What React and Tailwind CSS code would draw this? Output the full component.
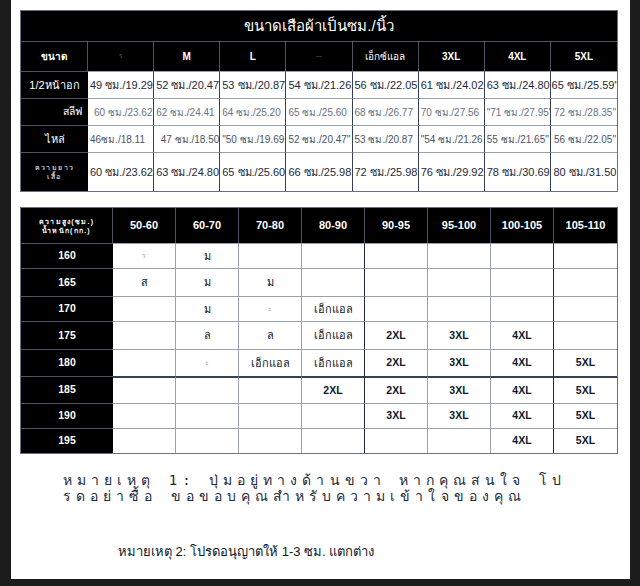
import React from 'react';

const SIZES = ['ร', 'M', 'L', '—', 'เอ็กซ์แอล', '3XL', '4XL', '5XL'];

const MEASURES = [
    {
        label: '1/2หน้าอก',
        tone: 'text-gray-800',
        cells: ['49 ซม./19.29', '52 ซม./20.47', '53 ซม./20.87', '54 ซม./21.26', '56 ซม./22.05', '61 ซม./24.02', '63 ซม./24.80', '65 ซม./25.59"'],
    },
    {
        label: 'สลีฟ',
        tone: 'text-gray-500',
        cells: ['60 ซม./23.62', '62 ซม./24.41', '64 ซม./25.20', '65 ซม./25.60', '68 ซม./26.77', '70 ซม./27.56', '"71 ซม./27.95"', '72 ซม./28.35"'],
    },
    {
        label: 'ไหล่',
        tone: 'text-gray-600',
        cells: ['46ซม./18.11', '47 ซม./18.50', '"50 ซม./19.69', '52 ซม./20.47"', '53 ซม./20.87', '"54 ซม./21.26', '55 ซม./21.65"', '56 ซม./22.05"'],
    },
    {
        label: 'ความยาว\nเสื้อ',
        tone: 'text-gray-800',
        cells: ['60 ซม./23.62', '63 ซม./24.80', '65 ซม./25.60', '66 ซม./25.98', '72 ซม./25.98', '76 ซม./29.92', '78 ซม./30.69', '80 ซม./31.50'],
    },
];

const WEIGHTS = ['50-60', '60-70', '70-80', '80-90', '90-95', '95-100', '100-105', '105-110'];

const FIT = [
    { h: '160', cells: ['ร', 'ม', '', '', '', '', '', ''] },
    { h: '165', cells: ['ส', 'ม', 'ม', '', '', '', '', ''] },
    { h: '170', cells: ['', 'ม', 'ะ', 'เอ็กแอล', '', '', '', ''] },
    { h: '175', cells: ['', 'ล', 'ล', 'เอ็กแอล', '2XL', '3XL', '4XL', ''] },
    { h: '180', cells: ['', 'ะ', 'เอ็กแอล', 'เอ็กแอล', '2XL', '3XL', '4XL', '5XL'] },
    { h: '185', cells: ['', '', '', '2XL', '2XL', '3XL', '4XL', '5XL'] },
    { h: '190', cells: ['', '', '', '', '3XL', '3XL', '4XL', '5XL'] },
    { h: '195', cells: ['', '', '', '', '', '', '4XL', '5XL'] },
];

const ROW_H = ['h-[25px]', 'h-[28px]', 'h-[25px]', 'h-[28px]', 'h-[27px]', 'h-[27px]', 'h-[25px]', 'h-[25px]'];

const faded = (v) => v === 'ร' || v === 'ะ' || v === '—';

export default function App() {
    return (
        <div className="w-[640px] h-[586px] bg-[#1c1c1c] pl-[11px] pr-[10px] pb-[7px]" style={{ fontFamily: '"Liberation Sans", "Noto Sans", sans-serif' }}>
            <div className="h-full bg-white pt-[10px] px-[9px]">
                {/* Size chart */}
                <div className="w-[598px] border border-gray-500 grid grid-cols-[67px_repeat(8,1fr)]">
                    <div className="col-span-9 h-[30px] bg-black text-white text-[15px] flex items-center justify-center">
                        ขนาดเสือผ้าเป็นซม./นิ้ว
                    </div>
                    <div className="h-[30px] bg-black text-white text-[10px] font-bold flex items-center justify-center border-t border-r border-gray-600">ขนาด</div>
                    {SIZES.map((s, i) => (
                        <div key={s} className={`h-[30px] bg-black flex items-center justify-center border-t border-gray-600 ${i < 7 ? 'border-r' : ''} ${faded(s) ? 'text-gray-500 text-[6px]' : s.length > 3 ? 'text-white text-[10px]' : 'text-white text-[10px] font-bold'}`}>
                            {s}
                        </div>
                    ))}
                    {MEASURES.map((row, r) => (
                        <React.Fragment key={row.label}>
                            <div className={`bg-black text-white flex items-center text-center whitespace-pre-line whitespace-nowrap border-t border-gray-600 ${r === 3 ? 'h-[39px] justify-center text-[7px] leading-[9px] tracking-[0.2em]' : r === 1 ? 'h-[27px] justify-end pr-[6px] text-[10.5px]' : 'h-[27px] justify-center text-[11px]'}`}>
                                {row.label}
                            </div>
                            {row.cells.map((c, i) => (
                                <div key={i} className={`flex items-center overflow-hidden whitespace-nowrap border-t border-gray-400 ${i < 7 ? 'border-r border-r-gray-700' : 'justify-center'} ${row.tone} ${r === 3 ? 'h-[39px] text-[11px]' : r === 0 ? 'h-[27px] text-[11px]' : 'h-[27px] text-[10px]'} ${r === 2 && i === 1 ? 'justify-end' : r === 1 && i === 0 ? 'pl-[6px]' : 'pl-[2px]'}`}>
                                    {c}
                                </div>
                            ))}
                        </React.Fragment>
                    ))}
                </div>

                {/* Height / weight chart */}
                <div className="mt-[15px] w-[598px] border border-gray-500 grid grid-cols-[92px_repeat(8,1fr)]">
                    <div className="h-[35px] bg-black text-white flex flex-col justify-center items-center text-[7px] leading-[9px] tracking-[0.18em] font-bold border-r border-gray-600">
                        <span>ความสูง(ซม.)</span>
                        <span>น้ำหนัก(กก.)</span>
                    </div>
                    {WEIGHTS.map((w, i) => (
                        <div key={w} className={`h-[35px] bg-black text-white text-[11px] font-bold flex items-center justify-center ${i < 7 ? 'border-r border-gray-600' : ''}`}>
                            {w}
                        </div>
                    ))}
                    {FIT.map((row, r) => (
                        <React.Fragment key={row.h}>
                            <div className={`${ROW_H[r]} bg-black text-white text-[10.5px] font-bold flex items-center justify-center border-t border-gray-600`}>
                                {row.h}
                            </div>
                            {row.cells.map((c, i) => (
                                <div key={i} className={`${ROW_H[r]} flex items-center justify-center whitespace-nowrap border-t ${r === 5 ? 'border-t-gray-700 border-t-2' : 'border-t-gray-400'} ${i < 7 ? (i === 3 || i === 6 ? 'border-r border-r-gray-800' : 'border-r border-r-gray-400') : ''} ${faded(c) ? 'text-gray-400 text-[7px]' : /XL/.test(c) ? 'text-gray-900 text-[10.5px] font-bold' : 'text-gray-900 text-[11px]'}`}>
                                    {c}
                                </div>
                            ))}
                        </React.Fragment>
                    ))}
                </div>

                {/* Notes */}
                <div className="mt-[18px] pl-[43px] text-[14px] leading-[16px] tracking-[0.36em] text-gray-800" style={{ fontFamily: '"DejaVu Sans Mono", "Liberation Mono", monospace' }}>
                    <p>หมายเหตุ 1: ปุ่มอยู่ทางด้านขวา หากคุณสนใจ โป</p>
                    <p>รดอย่าซื้อ ขอขอบคุณสำหรับความเข้าใจของคุณ</p>
                </div>
                <p className="mt-[38px] pl-[98px] text-[13px] text-gray-900">
                    หมายเหตุ 2: โปรดอนุญาตให้ 1-3 ซม. แตกต่าง
                </p>
            </div>
        </div>
    );
}
